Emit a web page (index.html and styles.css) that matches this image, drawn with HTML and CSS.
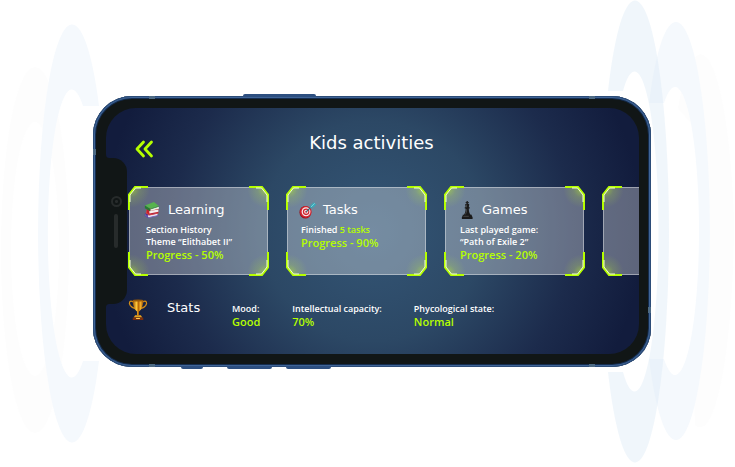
FILE: index.html
```html
<!DOCTYPE html>
<html lang="en">
<head>
<meta charset="utf-8">
<meta name="viewport" content="width=device-width, initial-scale=1">
<title>Kids activities</title>
<link rel="stylesheet" href="styles.css">
</head>
<body>
<svg width="0" height="0" class="defs" aria-hidden="true">
  <defs>
    <radialGradient id="glow" cx="0.1" cy="0.1" r="0.8">
      <stop offset="0" stop-color="#c4ff1a" stop-opacity="0.5"/>
      <stop offset="0.45" stop-color="#c4ff1a" stop-opacity="0.15"/>
      <stop offset="1" stop-color="#c4ff1a" stop-opacity="0"/>
    </radialGradient>
    <linearGradient id="gold" x1="0" x2="1" y1="0" y2="0">
      <stop offset="0" stop-color="#8f4a05"/>
      <stop offset="0.35" stop-color="#ffc83a"/>
      <stop offset="0.55" stop-color="#b96a08"/>
      <stop offset="0.75" stop-color="#f6b12a"/>
      <stop offset="1" stop-color="#8f4a05"/>
    </linearGradient>
    <symbol id="corner" viewBox="0 0 24 24">
      <path d="M1 24V9L7 1h17v23z" fill="url(#glow)"/>
      <path d="M1 24V8.500L7 1h13" fill="none" stroke="#b6ff00" stroke-width="2"/>
      <path d="M2 16V9L7.500 2H13" fill="none" stroke="#f2ffd0" stroke-width="1"/>
    </symbol>
  </defs>
</svg>

<main class="stage">
  <svg class="rings rings-left" viewBox="0 0 110 467" aria-hidden="true">
    <path class="ring-faint" fill-rule="evenodd" d="M35 67a34 183 0 0 0 0 366a34 183 0 0 0 0-366zM35 122a24 127 0 0 1 0 254a24 127 0 0 1 0-254z"/>
    <path class="ring-soft" d="M99 106A34 209 0 1 0 99 361H83A24 144 0 1 1 83 106Z"/>
  </svg>
  <svg class="rings rings-right" viewBox="0 0 130 467" aria-hidden="true">
    <path class="ring-faint" d="M73 108A34 209 0 0 1 129 220A34 209 0 0 1 90 425L88 370A24 144 0 0 0 92 130Z"/>
    <path class="ring-soft" d="M44 103A34 209 0 1 1 44 359H59A24 144 0 1 0 59 103Z"/>
    <path class="ring-strong" d="M3 91A34 231 0 1 1 3 372H18A24 160 0 1 0 18 91Z"/>
  </svg>

  <section class="phone">
    <i class="key key-power"></i>
    <i class="key key-mute"></i>
    <i class="key key-up"></i>
    <i class="key key-down"></i>
    <i class="band band-tl"></i>
    <i class="band band-tr"></i>
    <i class="band band-bl"></i>
    <i class="band band-br"></i>
    <i class="band band-left"></i>
    <i class="band band-right"></i>

    <div class="screen">
      <header class="header">
        <button class="back" type="button" aria-label="Back">
          <svg viewBox="0 0 20 18"><path d="M9.500 2L3 9l6.500 7M17.500 2L11 9l6.500 7" fill="none" stroke="#b6ff00" stroke-width="2.800" stroke-linecap="round" stroke-linejoin="round"/></svg>
        </button>
        <h1 class="title">Kids activities</h1>
      </header>

      <div class="cards">
        <article class="card card-learning">
          <svg class="corner tl"><use href="#corner"/></svg><svg class="corner tr"><use href="#corner"/></svg><svg class="corner bl"><use href="#corner"/></svg><svg class="corner br"><use href="#corner"/></svg>
          <div class="card-head">
            <svg class="icon" viewBox="0 0 20 20" aria-hidden="true">
              <path d="M1 14l11-1 4 3-12 2.500-3-2z" fill="#4a3c8c"/>
              <path d="M4 16l11-2v2.500L5 18.500z" fill="#e6e3f0"/>
              <path d="M1 14v2.500l4 2.500 11-2.500v-1L5 18z" fill="#6d56b5"/>
              <path d="M3 8l12 .5 1 1v3.500L5 15l-2-2z" fill="#c8202c"/>
              <path d="M6 11l10-1.500v2.500L6 14z" fill="#f4eeee"/>
              <path d="M3 9v4l3 2 10-2v1L6 16l-4-2.500z" fill="#e43b3b"/>
              <path d="M1 5l10-4 5.500 4.500L7 8.500z" fill="#57b34e"/>
              <path d="M7 9l9.500-3v2.500L7 11z" fill="#e9efe2"/>
              <path d="M1 5v3l6 3.500V9z" fill="#257a32"/>
              <path d="M7 8.500l9.500-3v.8L7 9.500z" fill="#2f8a3a"/>
            </svg>
            <h2>Learning</h2>
          </div>
          <p>Section History<br>Theme “Elithabet II”</p>
          <p class="progress">Progress - 50%</p>
        </article>

        <article class="card card-tasks">
          <svg class="corner tl"><use href="#corner"/></svg><svg class="corner tr"><use href="#corner"/></svg><svg class="corner bl"><use href="#corner"/></svg><svg class="corner br"><use href="#corner"/></svg>
          <div class="card-head">
            <svg class="icon" viewBox="0 0 20 20" aria-hidden="true">
              <ellipse cx="7" cy="12.500" rx="6.500" ry="7" fill="#8f1720"/>
              <ellipse cx="7.500" cy="12" rx="6.500" ry="6.500" fill="#d3222e"/>
              <ellipse cx="7.800" cy="12" rx="4.900" ry="5" fill="#f6eeee"/>
              <ellipse cx="7.900" cy="12" rx="3.600" ry="3.700" fill="#d3222e"/>
              <circle cx="8" cy="12" r="2.300" fill="#f6eeee"/>
              <circle cx="8" cy="12" r="1.100" fill="#d3222e"/>
              <path d="M8 12l7-7" stroke="#2b6f80" stroke-width="1.200"/>
              <path d="M12.500 7.500l.5-3L17 1l.2 2 2.300.3-3.500 4z" fill="#3ba9b8"/>
              <path d="M13 7l4.500-4.500" stroke="#9be4ea" stroke-width=".7"/>
            </svg>
            <h2>Tasks</h2>
          </div>
          <p>Finished <em>5 tasks</em></p>
          <p class="progress">Progress - 90%</p>
        </article>

        <article class="card card-games">
          <svg class="corner tl"><use href="#corner"/></svg><svg class="corner tr"><use href="#corner"/></svg><svg class="corner bl"><use href="#corner"/></svg><svg class="corner br"><use href="#corner"/></svg>
          <div class="card-head">
            <svg class="icon" viewBox="0 0 20 20" aria-hidden="true">
              <path d="M9.500 0h1.500v1.200h1v1h-1v1.300h-1.500V2.200h-1v-1h1z" fill="#222"/>
              <path d="M8 3.500c1-1 3.500-1 4.500 0L12 7h1v1.200h-1c0 3 .5 5 2 7h1.300v1.500l.9 1V20H4.300v-2.300l.9-1v-1.500h1.300c1.500-2 2-4 2-7h-1V7h1z" fill="#191919"/>
              <path d="M9.500 4v3M9.600 9c0 3-.6 4.500-1.600 6M6 17h6" fill="none" stroke="#555" stroke-width=".8"/>
            </svg>
            <h2>Games</h2>
          </div>
          <p>Last played game:<br>“Path of Exile 2”</p>
          <p class="progress">Progress - 20%</p>
        </article>

        <article class="card">
          <svg class="corner tl"><use href="#corner"/></svg><svg class="corner bl"><use href="#corner"/></svg>
        </article>
      </div>

      <section class="stats">
        <svg class="trophy" viewBox="0 0 20 22" aria-hidden="true">
          <path d="M5 3C1 1 0 4 2 7c1.500 2 3 2.500 5 3M15 3c4-2 5 1 3 4-1.500 2-3 2.500-5 3" fill="none" stroke="#d48d17" stroke-width="1.300"/>
          <path d="M4.500 1h11c0 6-1.500 10-4.500 12v4H9v-4C6 11 4.500 7 4.500 1z" fill="url(#gold)"/>
          <ellipse cx="10" cy="1.500" rx="5.500" ry="1" fill="#9a5a08"/>
          <path d="M7 17h6l1.500 2.500h-9z" fill="#e9a21d"/>
          <path d="M4.500 19.500h11V22h-11z" fill="#7b2e0c"/>
          <path d="M8 19.800h4v1.200H8z" fill="#ffd052"/>
        </svg>
        <h2>Stats</h2>
        <dl class="stat-list">
          <div><dt>Mood:</dt><dd>Good</dd></div>
          <div><dt>Intellectual capacity:</dt><dd>70%</dd></div>
          <div><dt>Phycological state:</dt><dd>Normal</dd></div>
        </dl>
      </section>
    </div>

    <div class="notch" aria-hidden="true">
      <svg class="fillet fillet-top" viewBox="0 0 4 4"><path d="M0 0v4h4C1 4 0 3 0 0z"/></svg>
      <svg class="fillet fillet-bottom" viewBox="0 0 4 4"><path d="M0 4V0h4C1 0 0 1 0 4z"/></svg>
      <i class="camera"></i>
      <i class="speaker"></i>
    </div>
  </section>
</main>
</body>
</html>
```
FILE: styles.css
```css
* {
  box-sizing: border-box;
}

body,
h1,
h2,
p,
dl,
dd {
  margin: 0;
}

body {
  background: #fff;
  color: #fff;
  font: 600 9px/12px "Open Sans", "Noto Sans", sans-serif;
}

.defs {
  position: absolute;
}

.stage {
  position: relative;
  overflow: hidden;
  padding: 96px 84px 100px 93px;
}

/* Decorative waves on both sides of the phone */
.rings {
  position: absolute;
  top: 0;
  height: 467px;
}

.rings-left {
  left: 0;
  width: 110px;
}

.rings-right {
  right: 0;
  width: 130px;
}

.ring-faint {
  fill: #fdfdfd;
}

.ring-soft {
  fill: #f5f9fd;
}

.ring-strong {
  fill: #dceaf6;
  fill-opacity: 0.42;
}

/* Device */
.phone {
  position: relative;
  padding: 12px 12px 13px 13px;
  border-radius: 39px;
  background: #111616;
  box-shadow: inset 0 0 0 1px #2c4c78, inset 0 0 0 2px #3f6496, inset 0 0 0 3px #142c4e;
}

.key {
  position: absolute;
  height: 3px;
  background: #2d4f80;
}

.key-power {
  top: -2px;
  left: 150px;
  width: 73px;
  border-radius: 2px 2px 0 0;
}

.key-mute,
.key-up,
.key-down {
  bottom: -2px;
  width: 45px;
  border-radius: 0 0 2px 2px;
}

.key-mute {
  left: 88px;
  width: 22px;
}

.key-up {
  left: 134px;
}

.key-down {
  left: 193px;
}

.band {
  position: absolute;
  width: 6px;
  height: 3px;
  background: #4d6a84;
}

.band-tl,
.band-bl {
  left: 56px;
}

.band-tr,
.band-br {
  right: 56px;
}

.band-tl,
.band-tr {
  top: 0;
}

.band-bl,
.band-br {
  bottom: 0;
}

.band-left,
.band-right {
  width: 3px;
  height: 6px;
}

.band-left {
  top: 53px;
  left: 0;
}

.band-right {
  right: 0;
  bottom: 54px;
}

.notch {
  position: absolute;
  top: 62px;
  left: 3px;
  width: 31px;
  height: 146px;
  border-radius: 0 14px 14px 0;
  background: #111616;
}

.fillet {
  position: absolute;
  left: 10px;
  width: 4px;
  height: 4px;
  fill: #111616;
}

.fillet-top {
  top: -4px;
}

.fillet-bottom {
  bottom: -4px;
}

.camera {
  position: absolute;
  top: 38px;
  left: 15px;
  width: 11px;
  height: 11px;
  border: 2px solid #272b2b;
  border-radius: 50%;
  background: radial-gradient(circle, #272b2b 1px, transparent 2px);
}

.speaker {
  position: absolute;
  top: 56px;
  left: 18px;
  width: 4px;
  height: 34px;
  border-radius: 2px;
  background: #272b2b;
}

/* Screen */
.screen {
  overflow: hidden;
  padding: 23px 0 25px 22px;
  border-radius: 30px;
  background: radial-gradient(circle at 50% 50%, #345676 0, #2c4865 110px, #1c2b4c 200px, #121c3d 270px);
}

.header {
  display: grid;
  grid-template-columns: 1fr auto 1fr;
  min-height: 27px;
  padding-right: 24px;
}

.back {
  align-self: end;
  width: 20px;
  height: 18px;
  margin-left: 6px;
  padding: 0;
  border: 0;
  background: none;
}

.back svg {
  display: block;
  width: 20px;
  height: 18px;
}

.title {
  font: 400 18px/24px "DejaVu Sans", sans-serif;
}

h2 {
  font: 400 13px/18px "DejaVu Sans", sans-serif;
}

.cards {
  display: grid;
  grid-auto-flow: column;
  grid-auto-columns: 141px;
  gap: 17px;
  margin-top: 28px;
}

.card {
  position: relative;
  min-height: 90px;
  padding: 15px 0 13px 16px;
}

.card::before {
  content: "";
  position: absolute;
  inset: 1px;
  border: 1px solid rgba(255, 255, 255, 0.4);
  background: rgba(255, 255, 255, 0.32);
  clip-path: polygon(6px 0, calc(100% - 6px) 0, 100% 8px, 100% calc(100% - 8px), calc(100% - 6px) 100%, 6px 100%, 0 calc(100% - 8px), 0 8px);
}

.card > div,
.card > p {
  position: relative;
}

.card-learning {
  padding-left: 18px;
}

.card-tasks {
  padding-left: 15px;
}

.corner {
  position: absolute;
  width: 24px;
  height: 24px;
}

.tl {
  top: 0;
  left: 0;
}

.tr {
  top: 0;
  right: 0;
  transform: scaleX(-1);
}

.bl {
  bottom: 0;
  left: 0;
  transform: scaleY(-1);
}

.br {
  right: 0;
  bottom: 0;
  transform: scale(-1);
}

.card-head {
  display: flex;
  gap: 5px;
  margin: 0 0 5px -3px;
}

.icon {
  width: 20px;
  height: 18px;
}

em {
  color: #b6ff00;
  font-style: normal;
}

.progress,
dd {
  color: #b6ff00;
  font-size: 11px;
  line-height: 14px;
}

.stats {
  display: flex;
  gap: 19px;
  margin-top: 23px;
}

.trophy {
  width: 20px;
  height: 21px;
}

.stats h2 {
  width: 46px;
}

.stat-list {
  display: flex;
  gap: 32px;
  padding-top: 4px;
}
```
